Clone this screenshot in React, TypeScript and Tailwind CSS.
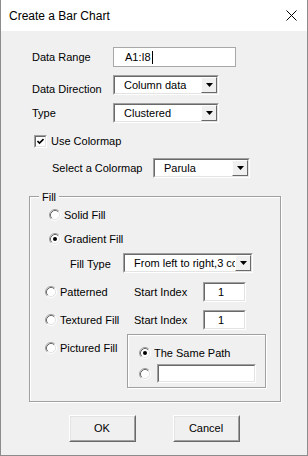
import React from "react";

function Sunken({ className = "", children }: { className?: string; children?: React.ReactNode }) {
  return (
    <div className={`border border-t-[#a0a0a0] border-l-[#a0a0a0] border-r-white border-b-white ${className}`}>
      <div className="h-full flex items-center bg-white border border-t-[#696969] border-l-[#696969] border-r-[#e3e3e3] border-b-[#e3e3e3]">
        {children}
      </div>
    </div>
  );
}

function Combo({ value, className = "" }: { value: string; className?: string }) {
  return (
    <Sunken className={className}>
      <span className="flex-1 pl-[9px] whitespace-nowrap overflow-hidden">{value}</span>
      <div className="h-full w-[16px] shrink-0 flex items-center justify-center bg-[#f0f0f0] border border-t-white border-l-white border-r-[#696969] border-b-[#696969]">
        <svg width="7" height="4" viewBox="0 0 7 4"><path d="M0 0H7L3.5 4Z" fill="#000" /></svg>
      </div>
    </Sunken>
  );
}

function Radio({ checked = false }: { checked?: boolean }) {
  return (
    <svg width="12" height="12" viewBox="0 0 12 12" className="shrink-0">
      <circle cx="6" cy="6" r="4.5" fill="#fff" />
      <path d="M2.11 9.89A5.5 5.5 0 0 1 9.89 2.11" stroke="#a0a0a0" fill="none" />
      <path d="M9.89 2.11A5.5 5.5 0 0 1 2.11 9.89" stroke="#fff" fill="none" />
      <path d="M2.82 9.18A4.5 4.5 0 0 1 9.18 2.82" stroke="#696969" fill="none" />
      <path d="M9.18 2.82A4.5 4.5 0 0 1 2.82 9.18" stroke="#e3e3e3" fill="none" />
      {checked && <circle cx="6" cy="6" r="2" fill="#000" />}
    </svg>
  );
}

function Button({ label }: { label: string }) {
  return (
    <div className="w-[67px] h-[27px] border border-t-white border-l-white border-r-[#696969] border-b-[#696969] bg-[#f0f0f0]">
      <div className="h-full flex items-center justify-center border border-t-[#e3e3e3] border-l-[#e3e3e3] border-r-[#a0a0a0] border-b-[#a0a0a0]">
        {label}
      </div>
    </div>
  );
}

export default function App() {
  return (
    <div className="w-[308px] h-[456px] flex flex-col bg-[#f0f0f0] border-x border-b border-[#8c8c8c] text-[11px] text-black font-['Liberation_Sans',Arial,sans-serif] overflow-hidden">
      <div className="h-[31px] shrink-0 bg-white flex items-center pl-[8px] pr-[10px]">
        <span className="flex-1 text-[12px] pt-[1px]">Create a Bar Chart</span>
        <svg width="11" height="11" viewBox="0 0 11 11"><path d="M0.5 0.5L10.5 10.5M10.5 0.5L0.5 10.5" stroke="#000" strokeWidth="1" /></svg>
      </div>

      <div className="flex flex-col pl-[31px]">
        <div className="mt-[16px] h-[20px] flex items-center">
          <span className="w-[81px]">Data Range</span>
          <div className="w-[123px] h-[20px] bg-white border border-[#a8a8a8] flex items-center pl-[11px]">
            A1:I8<span className="ml-[1px] w-[1px] h-[13px] bg-black" />
          </div>
        </div>
        <div className="mt-[8px] h-[20px] flex items-center">
          <span className="w-[81px] pt-[8px]">Data Direction</span>
          <Combo value="Column data" className="w-[106px] h-[20px]" />
        </div>
        <div className="mt-[8px] h-[20px] flex items-center">
          <span className="w-[81px]">Type</span>
          <Combo value="Clustered" className="w-[106px] h-[20px]" />
        </div>
        <div className="mt-[12px] h-[13px] flex items-center pl-[2px]">
          <div className="w-[13px] h-[13px] border border-t-[#a0a0a0] border-l-[#a0a0a0] border-r-white border-b-white">
            <div className="h-full bg-white border border-t-[#696969] border-l-[#696969] border-r-[#e3e3e3] border-b-[#e3e3e3] flex items-center justify-center">
              <svg width="7" height="7" viewBox="0 0 7 7"><path d="M0.5 3L2.5 5L6.5 1" stroke="#000" strokeWidth="1.6" fill="none" /></svg>
            </div>
          </div>
          <span className="ml-[4px]">Use Colormap</span>
        </div>
        <div className="mt-[10px] h-[20px] flex items-center pl-[20px]">
          <span className="w-[101px]">Select a Colormap</span>
          <Combo value="Parula" className="w-[97px] h-[20px]" />
        </div>
      </div>

      <div className="relative mt-[18px] ml-[28px] w-[252px] flex flex-col border border-[#a0a0a0] shadow-[inset_1px_1px_0_#fff,1px_1px_0_#fff] pb-[13px]">
        <span className="absolute left-[9px] top-[-8px] px-[3px] bg-[#f0f0f0]">Fill</span>
        <div className="mt-[8px] h-[20px] flex items-center pl-[19px]">
          <Radio />
          <span className="ml-[3px]">Solid Fill</span>
        </div>
        <div className="mt-[4px] h-[20px] flex items-center pl-[19px]">
          <Radio checked />
          <span className="ml-[3px]">Gradient Fill</span>
        </div>
        <div className="mt-[4px] h-[20px] flex items-center pl-[40px]">
          <span className="w-[53px] pt-[3px]">Fill Type</span>
          <Combo value="From left to right,3 colors" className="w-[130px] h-[20px]" />
        </div>
        <div className="mt-[9px] h-[20px] flex items-center pl-[15px]">
          <Radio />
          <span className="ml-[3px] w-[74px]">Patterned</span>
          <span className="w-[69px]">Start Index</span>
          <Sunken className="w-[43px] h-[20px]"><span className="pl-[13px]">1</span></Sunken>
        </div>
        <div className="mt-[8px] h-[20px] flex items-center pl-[15px]">
          <Radio />
          <span className="ml-[3px] w-[74px]">Textured Fill</span>
          <span className="w-[69px]">Start Index</span>
          <Sunken className="w-[43px] h-[20px]"><span className="pl-[13px]">1</span></Sunken>
        </div>
        <div className="mt-[4px] flex items-start pl-[15px]">
          <div className="flex items-center h-[20px] mt-[4px] w-[82px]">
            <Radio />
            <span className="ml-[3px]">Pictured Fill</span>
          </div>
          <div className="w-[139px] h-[54px] flex flex-col border border-[#a0a0a0] shadow-[inset_1px_1px_0_#fff,1px_1px_0_#fff] pl-[11px]">
            <div className="mt-[9px] h-[18px] flex items-center">
              <Radio checked />
              <span className="ml-[3px]">The Same Path</span>
            </div>
            <div className="mt-[2px] h-[19px] flex items-center">
              <Radio />
              <Sunken className="ml-[6px] w-[99px] h-[19px]" />
            </div>
          </div>
        </div>
      </div>

      <div className="mt-[13px] flex justify-center gap-[37px]">
        <Button label="OK" />
        <Button label="Cancel" />
      </div>
    </div>
  );
}
